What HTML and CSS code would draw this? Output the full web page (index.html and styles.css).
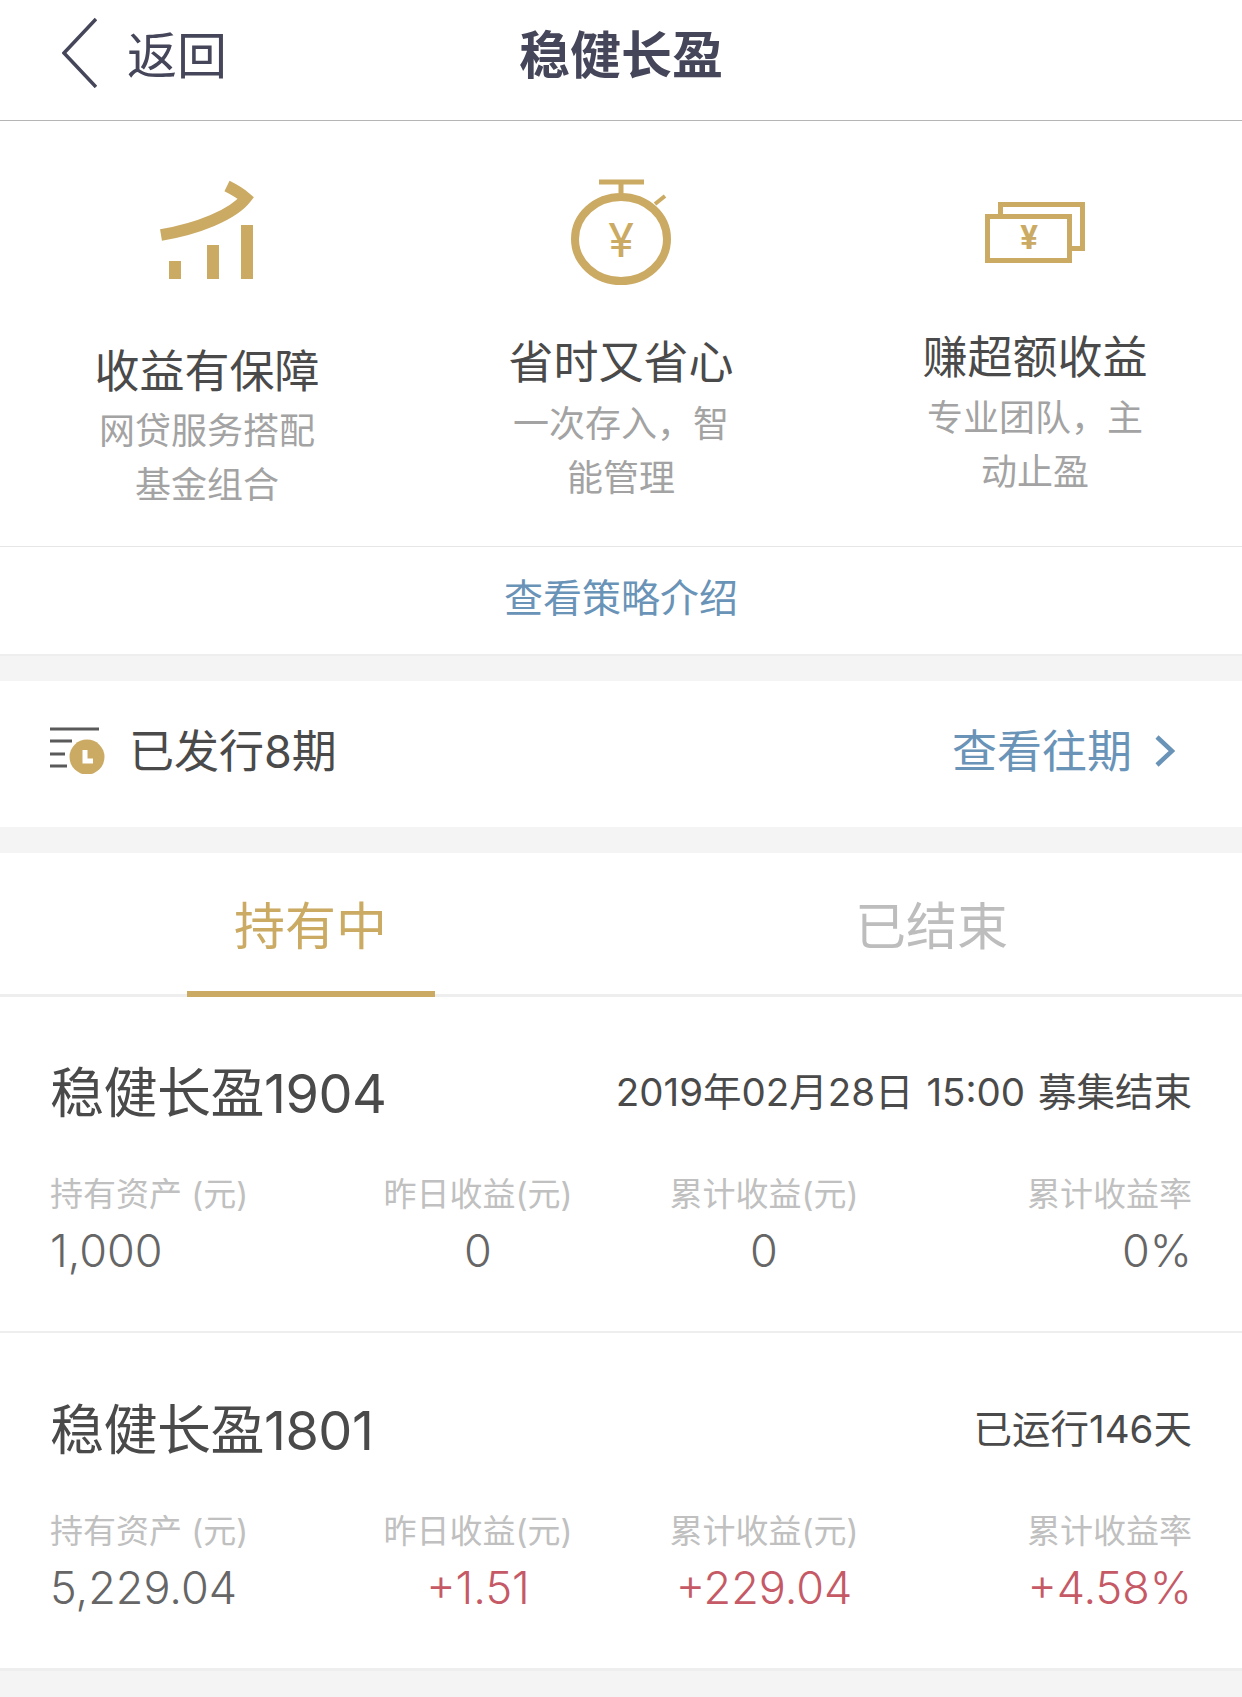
FILE: index.html
```html
<!DOCTYPE html>
<html lang="zh-CN">
<head>
    <meta charset="UTF-8">
    <meta name="viewport" content="width=device-width, initial-scale=1.0">
    <title>稳健长盈</title>
    <link rel="stylesheet" href="styles.css">
</head>
<body>
    <!-- Top bar -->
    <header class="topbar">
        <div class="back">
            <svg class="back-icon" width="35" height="72" viewBox="0 0 35 72">
                <path d="M34 3 L2 37 L34 71" fill="none" stroke="#45465a" stroke-width="3.5"/>
            </svg>
            <span>返回</span>
        </div>
        <div class="topbar-title">稳健长盈</div>
        <div></div>
    </header>

    <!-- Three selling points -->
    <section class="features">
        <div class="feature feature-one">
            <svg class="feature-icon" width="120" height="120" viewBox="0 0 120 120">
                <path d="M14 65 C50 59 86 45 99 28 Q92 22 80 16" fill="none" stroke="#cbaa63" stroke-width="11.5"/>
                <rect x="22" y="91" width="12" height="18" fill="#cbaa63"/>
                <rect x="60" y="75" width="12" height="34" fill="#cbaa63"/>
                <rect x="94" y="55" width="12" height="54" fill="#cbaa63"/>
            </svg>
            <div class="feature-title">收益有保障</div>
            <div class="feature-desc">网贷服务搭配基金组合</div>
        </div>
        <div class="feature feature-two">
            <svg class="feature-icon" width="120" height="120" viewBox="0 0 120 120">
                <ellipse cx="60" cy="69" rx="46" ry="42" fill="none" stroke="#cbaa63" stroke-width="8"/>
                <path d="M38 12 H83 M60 12 V27" fill="none" stroke="#cbaa63" stroke-width="5"/>
                <path d="M94 34 L104 26" fill="none" stroke="#cbaa63" stroke-width="4"/>
                <text class="yen" x="60" y="87" font-size="48" text-anchor="middle">¥</text>
            </svg>
            <div class="feature-title">省时又省心</div>
            <div class="feature-desc">一次存入，智能管理</div>
        </div>
        <div class="feature feature-three">
            <svg class="feature-icon" width="120" height="120" viewBox="0 0 120 120">
                <path d="M25.5 46 V34.5 H107.5 V78.5 H96" fill="none" stroke="#cbaa63" stroke-width="5"/>
                <rect x="12.5" y="46.5" width="82" height="44" fill="none" stroke="#cbaa63" stroke-width="5"/>
                <text class="yen yen-bold" x="54" y="79" font-size="33" text-anchor="middle">¥</text>
            </svg>
            <div class="feature-title">赚超额收益</div>
            <div class="feature-desc">专业团队，主动止盈</div>
        </div>
    </section>
    <div class="strategy-link">查看策略介绍</div>

    <!-- Issued periods -->
    <section class="issued">
        <div class="issued-left">
            <svg width="60" height="52" viewBox="0 0 60 52">
                <path d="M0 7 H49 M0 19 H22 M0 32 H15 M0 44 H17" fill="none" stroke="#5a5a5a" stroke-width="3"/>
                <circle cx="37" cy="35" r="17.5" fill="#cbaa63"/>
                <path d="M35 28 V39 H43" fill="none" stroke="#fff" stroke-width="5"/>
            </svg>
            <span>已发行8期</span>
        </div>
        <div class="issued-right">
            <span>查看往期</span>
            <svg class="issued-arrow" width="20" height="32" viewBox="0 0 20 32">
                <path d="M2 2 L17 16 L2 30" fill="none" stroke="#6a93b8" stroke-width="4.5"/>
            </svg>
        </div>
    </section>

    <!-- Tabs -->
    <nav class="tabs">
        <div class="tab"><div class="tab-label tab-active">持有中</div></div>
        <div class="tab"><div class="tab-label">已结束</div></div>
    </nav>

    <!-- Holdings -->
    <article class="card">
        <div class="card-head">
            <div class="card-name">稳健长盈1904</div>
            <div class="card-meta">2019年02月28日 15:00 募集结束</div>
        </div>
        <div class="stats">
            <div class="stat stat-left">
                <div class="stat-label">持有资产 (元)</div>
                <div class="stat-value">1,000</div>
            </div>
            <div class="stat">
                <div class="stat-label">昨日收益(元)</div>
                <div class="stat-value">0</div>
            </div>
            <div class="stat">
                <div class="stat-label">累计收益(元)</div>
                <div class="stat-value">0</div>
            </div>
            <div class="stat stat-right">
                <div class="stat-label">累计收益率</div>
                <div class="stat-value">0%</div>
            </div>
        </div>
    </article>

    <article class="card card-last">
        <div class="card-head">
            <div class="card-name">稳健长盈1801</div>
            <div class="card-meta">已运行146天</div>
        </div>
        <div class="stats">
            <div class="stat stat-left">
                <div class="stat-label">持有资产 (元)</div>
                <div class="stat-value">5,229.04</div>
            </div>
            <div class="stat">
                <div class="stat-label">昨日收益(元)</div>
                <div class="stat-value up">+1.51</div>
            </div>
            <div class="stat">
                <div class="stat-label">累计收益(元)</div>
                <div class="stat-value up">+229.04</div>
            </div>
            <div class="stat stat-right">
                <div class="stat-label">累计收益率</div>
                <div class="stat-value up">+4.58%</div>
            </div>
        </div>
    </article>
</body>
</html>
```

FILE: styles.css
```css
body {
    margin: 0;
    padding: 0;
    background: #f4f4f4;
    color: #4a4a4a;
    font-family: Inter, "Noto Sans CJK SC", sans-serif;
    font-weight: 400;
}

svg {
    display: block;
    flex-shrink: 0;
}

/* Top bar */
.topbar {
    display: grid;
    grid-template-columns: 1fr auto 1fr;
    align-items: center;
    height: 120px;
    background: #fff;
    border-bottom: 1px solid #b5b5b5;
    color: #45465a;
}

.back {
    display: flex;
    align-items: center;
    gap: 30px;
    padding: 0 0 16px 62px;
    font-size: 50px;
}

.topbar-title {
    padding-bottom: 16px;
    font-size: 51px;
    font-weight: 700;
}

/* Selling points */
.features {
    display: flex;
    height: 425px;
    background: #fff;
    border-bottom: 1px solid #e6e6e6;
}

.feature {
    flex: 1;
    display: flex;
    flex-direction: column;
    align-items: center;
    padding-top: 49px;
    box-sizing: border-box;
}

.feature-title {
    font-size: 45px;
    line-height: 60px;
}

.feature-one .feature-title { margin-top: 52px; }
.feature-two .feature-title { margin-top: 43px; }
.feature-three .feature-title { margin-top: 38px; }

.feature-desc {
    width: 218px;
    margin-top: 4px;
    font-size: 36px;
    line-height: 54px;
    text-align: center;
    color: #a3a3a3;
}

.feature-one .feature-desc { margin-top: 2px; }
.feature-three .feature-desc { margin-top: 3px; }

.yen {
    font-family: Roboto, sans-serif;
    fill: #cbaa63;
}

.yen-bold {
    font-weight: 700;
}

.strategy-link {
    height: 107px;
    line-height: 102px;
    text-align: center;
    font-size: 39px;
    color: #6a93b8;
    background: #fff;
    border-bottom: 2px solid #eeeeee;
}

/* Issued row */
.issued {
    display: flex;
    align-items: center;
    justify-content: space-between;
    height: 134px;
    margin-top: 25px;
    padding: 0 67px 12px 50px;
    background: #fff;
    font-size: 45px;
}

.issued-left {
    display: flex;
    align-items: center;
    gap: 19px;
}

.issued-right {
    display: flex;
    align-items: center;
    gap: 23px;
    color: #6a93b8;
}

.issued-arrow {
    margin-top: 6px;
}

/* Tabs */
.tabs {
    display: flex;
    height: 141px;
    margin-top: 26px;
    background: #fff;
    border-bottom: 3px solid #eeeeee;
}

.tab {
    flex: 1;
    display: flex;
    justify-content: center;
    font-size: 51px;
    color: #bdbdbd;
}

.tab-label {
    width: 248px;
    height: 138px;
    line-height: 148px;
    text-align: center;
}

.tab-active {
    color: #cbaa63;
    border-bottom: 6px solid #cbaa63;
}

/* Holding cards */
.card {
    padding: 62px 50px 55px 50px;
    background: #fff;
    border-bottom: 2px solid #eeeeee;
}

.card-last {
    padding-top: 63px;
    padding-bottom: 55px;
    border-bottom: 3px solid #eeeeee;
}

.card-head {
    display: flex;
    align-items: center;
    justify-content: space-between;
    height: 60px;
}

.card-name {
    font-size: 54px;
    letter-spacing: -0.5px;
}

.card-meta {
    font-size: 38.5px;
    word-spacing: 2px;
}

.stats {
    display: grid;
    grid-template-columns: 242px 200px 200px 1fr;
    column-gap: 86px;
    margin-top: 55px;
}

.stat {
    text-align: center;
    white-space: nowrap;
}

.stat-left {
    text-align: left;
}

.stat-right {
    text-align: right;
}

.stat-label {
    height: 40px;
    line-height: 40px;
    font-size: 33px;
    color: #c0c0c0;
}

.stat-value {
    height: 50px;
    margin-top: 12px;
    line-height: 50px;
    font-size: 45px;
    font-weight: 300;
    color: #666666;
}

.up {
    color: #c55a66;
}
```
